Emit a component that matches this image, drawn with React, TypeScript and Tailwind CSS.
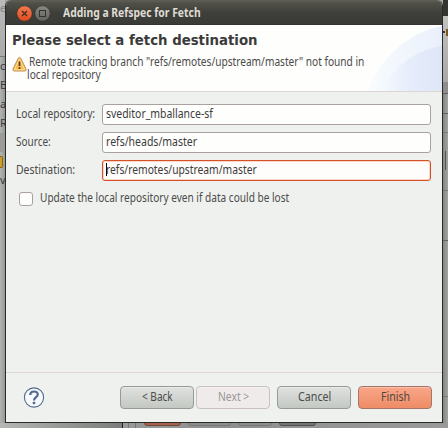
import { useLayoutEffect, useRef, useState } from "react";

// Text condensed horizontally so that it fills a given width.
function Fit({ children, width, className = "" }: { children: string; width: number; className?: string }) {
  const ref = useRef<HTMLSpanElement>(null);
  const [scale, setScale] = useState(1);
  useLayoutEffect(() => {
    if (ref.current) setScale(width / ref.current.offsetWidth);
  }, [width, children]);
  return (
    <span style={{ width }} className={`block shrink-0 ${className}`}>
      <span ref={ref} style={{ transform: `scaleX(${scale})` }} className="block w-max origin-left whitespace-pre">
        {children}
      </span>
    </span>
  );
}

const rows = [
  { label: "Local repository:", lw: 79, value: "sveditor_mballance-sf", vw: 107 },
  { label: "Source:", lw: 35, value: "refs/heads/master", vw: 91 },
  { label: "Destination:", lw: 59, value: "refs/remotes/upstream/master", vw: 151, focused: true },
];

function Field({ label, lw, value, vw, focused }: (typeof rows)[number]) {
  return (
    <div className="flex h-[21px] items-center">
      <div className="w-[86px] shrink-0 pb-[2px] leading-[16px]"><Fit width={lw}>{label}</Fit></div>
      <div className={`flex h-[21px] w-[329px] items-center rounded-[3px] border pb-[2px] pl-[3px] leading-[16px] text-[#3c3c3c] ${focused ? "border-[#d65027] bg-[#fffdfb] shadow-[inset_0_0_0_1px_#f9d6c8]" : "border-[#a8a19f] bg-[#fefefd]"}`}>
        {focused && <span className="-mr-px h-[13px] w-px bg-black" />}
        <Fit width={vw}>{value}</Fit>
      </div>
    </div>
  );
}

function Button({ text, w, kind = "" }: { text: string; w: number; kind?: string }) {
  const look =
    kind === "primary"
      ? "border-[#a47669] bg-linear-to-b from-[#f9a688] to-[#ee8c66] text-[#514640]"
      : kind === "disabled"
        ? "border-[#c9c1c0] bg-[#efebea] text-[#999695]"
        : "border-[#969a97] bg-linear-to-b from-[#dfe2df] to-[#c4c8c3] text-[#4b4b4b]";
  return (
    <button className={`flex h-[23px] w-[74px] items-center justify-center rounded-[4px] border pb-px leading-[16px] shadow-[inset_0_1px_0_#ffffff50] ${look}`}>
      <Fit width={w} className="text-left">{text}</Fit>
    </button>
  );
}

export default function App() {
  return (
    <div className="relative h-[428px] w-[448px] overflow-hidden bg-[#a1a4a1] font-['Noto_Sans','Open_Sans',sans-serif] text-[12px] text-[#4b4b4b]">
      <div className="absolute left-0 top-0 h-[428px] w-[5px] bg-linear-to-r from-[#b1b4b1] to-[#969994] text-[11px] leading-[16px] text-[#39394b]">
        <div className="h-[57px] border-b border-[#777] bg-linear-to-b from-[#bbb] to-[#aaa]" />
        <span className="absolute left-0 top-0 text-[#858585]">e</span>
        <span className="absolute left-0 top-[58px]">c</span>
        <span className="absolute left-0 top-[77px]">B</span>
        <span className="absolute left-0 top-[96px]">a</span>
        <span className="absolute left-0 top-[115px]">R</span>
        <span className="absolute left-0 top-[133px] h-[19px] w-[5px] bg-[#9b9a99]" />
        <span className="absolute left-0 top-[156px] h-[12px] w-[3px] rounded-r-[2px] border border-l-0 border-[#8c6510] bg-[#cf9d27]" />
        <span className="absolute left-0 top-[172px]">v</span>
      </div>
      <div className="absolute right-0 top-0 h-[428px] w-[5px] overflow-hidden bg-linear-to-r from-[#858785] to-[#a2a4a2]">
        <div className="h-[16px] bg-[#343431]" />
        <div className="h-[66px] bg-linear-to-b from-[#c1c1c0] to-[#a8a8a7]" />
        <div className="h-[12px] border-b border-[#626262] bg-[#8d8d8c]" />
        <div className="h-[20px] border-b border-[#626262]" />
        <div className="h-[19px] border-b border-[#777]" />
        <div className="h-[58px] border-b border-[#777]" />
        <div className="h-[50px] border-b border-[#626262]" />
        <div className="h-[156px] border-b border-[#777]" />
        <span className="absolute left-0 top-[31px] h-[2px] w-[2px] bg-[#34344d]" />
        <span className="absolute left-[3px] top-[29px] h-[7px] w-[2px] bg-[#7d5525]" />
        <span className="absolute left-[2px] top-[151px] h-[19px] w-px bg-[#555]" />
      </div>
      <div className="absolute bottom-0 left-0 flex h-[5px] w-[448px] bg-linear-to-r from-[#a4a6a4] via-[#8e8f8e] to-[#999a99]">
        <div className="w-[123px] border-r border-[#222] bg-linear-to-r from-[#b4b7b4] to-[#7b7d7b]" />
        <div className="ml-[5px] w-[8px] border-x border-[#777]" />
        <div className="-mt-[3px] ml-[8px] h-[6px] w-[37px] rounded-b-[3px] border border-[#70493d] bg-[#a7624c]" />
        <div className="-mt-[3px] ml-[7px] h-[6px] w-[43px] rounded-b-[3px] border border-[#777] bg-[#8e8d8c]" />
        <div className="-mt-[3px] ml-[7px] h-[6px] w-[34px] rounded-b-[3px] border border-[#777] bg-[#8e8d8c]" />
        <div className="-mt-[3px] ml-[7px] h-[6px] w-[37px] rounded-b-[3px] border border-[#505150] bg-[#747674]" />
      </div>

      <div className="absolute left-[5px] top-0 flex h-[423px] w-[438px] flex-col overflow-hidden rounded-t-[6px] border-x border-b border-[#2a2b29] bg-[#eff1ef]">
        <div className="flex h-[25px] shrink-0 items-center border-b border-t-2 border-b-[#333] border-t-[#5b5b54] bg-linear-to-b from-[#53534b] via-[#3e3e3b] to-[#3a3a37] pl-[10px]">
          <svg className="h-[17px] w-[36px]" viewBox="0 0 36 17">
            <defs>
              <linearGradient id="close" x2="0" y2="1"><stop stopColor="#f4794f" /><stop offset="1" stopColor="#df4c1e" /></linearGradient>
              <linearGradient id="max" x2="0" y2="1"><stop stopColor="#898982" /><stop offset="1" stopColor="#63635e" /></linearGradient>
            </defs>
            <circle cx="8.5" cy="8.5" r="7.7" fill="url(#close)" stroke="#33332f" strokeWidth=".6" />
            <path d="M6 6l5 5M11 6l-5 5" stroke="#3d2b23" strokeWidth="1.2" />
            <circle cx="26.5" cy="8.5" r="7.7" fill="url(#max)" stroke="#33332f" strokeWidth=".6" />
            <rect x="23.5" y="5.5" width="6" height="6" fill="none" stroke="#33332f" />
          </svg>
          <Fit width={138} className="ml-[11px] text-[11.5px] font-bold leading-[16px] text-[#dfdbd2]">Adding a Refspec for Fetch</Fit>
        </div>
        <div className="relative h-[67px] shrink-0 border-b border-[#ddd4d4] bg-[#fefefd]">
          <svg className="absolute right-0 top-0 h-[66px] w-[76px]" viewBox="0 0 76 66">
            <defs>
              <linearGradient id="arc" x2="1"><stop stopColor="#f8fcfe" /><stop offset="1" stopColor="#eaf0fb" /></linearGradient>
              <linearGradient id="arc2" x2="1"><stop stopColor="#f4f8fe" /><stop offset=".5" stopColor="#e5ecfa" /><stop offset="1" stopColor="#dfe6f7" /></linearGradient>
            </defs>
            <path d="M2 66C14 34 40 8 76 1V66Z" fill="url(#arc)" />
            <path d="M17 66C26 43 48 25 76 21V66Z" fill="url(#arc2)" />
          </svg>
          <div className="relative pl-[6px] pt-[6px]">
            <Fit width={246} className="font-['DejaVu_Sans',sans-serif] text-[14.5px] font-bold leading-[18px] text-[#3b3b3b]">Please select a fetch destination</Fit>
            <div className="mt-[6px] flex">
              <svg className="mt-[1px] h-[17px] w-[15px] shrink-0" viewBox="0 0 15 17">
                <path d="M7.5 1.5Q8.5 1.5 9 2.8L14 13Q14.5 15 12.8 15H2.2Q.5 15 1 13L6 2.8Q6.5 1.5 7.5 1.5Z" fill="#f5bd56" stroke="#b98d5b" />
                <path d="M7.5 3L12.8 13.8H2.2Z" fill="none" stroke="#ffe09a" />
                <path d="M7.5 5.5V10M7.5 11.3V13" stroke="#5c3b18" strokeWidth="1.7" />
              </svg>
              <div className="leading-[13px]">
                <Fit width={335} className="ml-[2px]">Remote tracking branch "refs/remotes/upstream/master" not found in</Fit>
                <Fit width={74}>local repository</Fit>
              </div>
            </div>
          </div>
        </div>
        <div className="flex h-[281px] shrink-0 flex-col gap-[7px] border-b border-[#e0d6d5] pl-[10px] pt-[12px]">
          {rows.map((r) => <Field key={r.label} {...r} />)}
          <div className="mt-[4px] flex h-[14px] items-center pl-[3px]">
            <span className="h-[14px] w-[14px] rounded-[3px] border border-[#aaa09f] bg-[#fefefd]" />
            <Fit width={249} className="ml-[7px] pb-[2px] leading-[16px]">Update the local repository even if data could be lost</Fit>
          </div>
        </div>
        <div className="flex h-[49px] items-center pl-[17px]">
          <svg className="h-[22px] w-[22px]" viewBox="0 0 22 22" fill="none">
            <circle cx="11" cy="10.5" r="9.6" fill="#f7f9fa" stroke="#526b8f" strokeWidth="1.1" />
            <path d="M7.2 8C7.2 3.4 14.8 3.4 14.8 7.5C14.8 10.3 11 10 11 13.5" stroke="#526b8f" strokeWidth="2.2" />
            <rect x="9.7" y="14.8" width="2.6" height="2.4" rx=".7" fill="#526b8f" />
          </svg>
          <div className="ml-[75px] flex">
            <Button text="< Back" w={31} />
            <div className="ml-[2px]"><Button text="Next >" w={31} kind="disabled" /></div>
            <div className="ml-[7px]"><Button text="Cancel" w={33} /></div>
            <div className="ml-[7px]"><Button text="Finish" w={29} kind="primary" /></div>
          </div>
        </div>
      </div>
    </div>
  );
}
